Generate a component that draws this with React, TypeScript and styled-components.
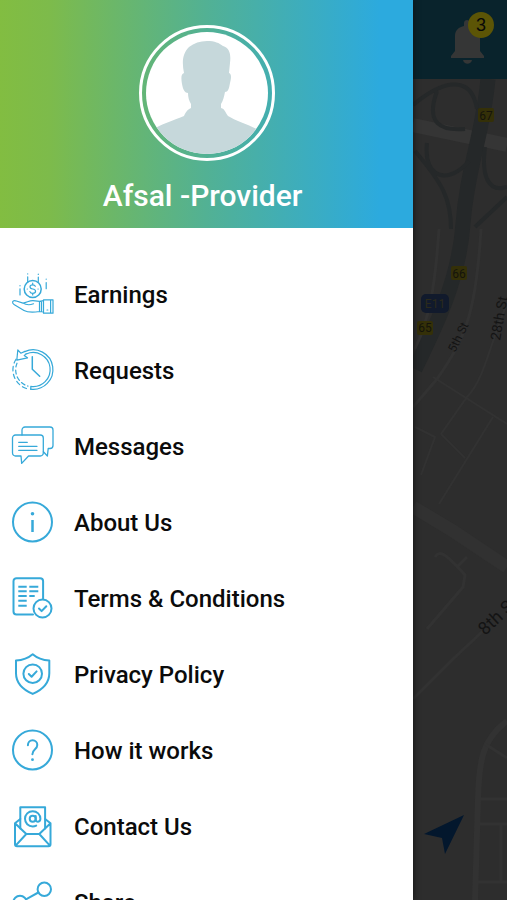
import React from "react";
import styled, { createGlobalStyle } from "styled-components";

const GlobalStyle = createGlobalStyle`
  * { box-sizing: border-box; }
  body { margin: 0; background: #2d2d2d; font-family: Roboto, "Liberation Sans", sans-serif; }
`;

const Screen = styled.div`
  display: flex;
  height: 100vh;
  overflow: hidden;
`;

const Drawer = styled.aside`
  display: flex;
  flex-direction: column;
  flex: 0 0 81.5%;
  z-index: 1;
  overflow: hidden;
  background: #fff;
  box-shadow: 0 0 6px #111;
`;

const Profile = styled.header`
  display: flex;
  flex-direction: column;
  flex-shrink: 0;
  align-items: center;
  padding: 25px 0 14px;
  background: linear-gradient(90deg, #82bd41 0%, #7dbb4b 12%, #52b194 50%, #2caade 92%, #2caade 100%);
`;

const AvatarRing = styled.div`
  display: flex;
  width: 136px;
  height: 136px;
  padding: 4px;
  border: 3px solid #fff;
  border-radius: 50%;

  svg {
    width: 100%;
    height: 100%;
    border-radius: 50%;
  }
`;

const Name = styled.h1`
  margin: 16px 0 0;
  padding-right: 8px;
  color: #fff;
  font-size: 30px;
  font-weight: 500;
  line-height: 37px;
`;

const Menu = styled.ul`
  margin: 0;
  padding: 28px 0 0;
  list-style: none;
`;

const MenuLink = styled.a`
  display: flex;
  align-items: center;
  gap: 20px;
  height: 76px;
  padding: 0 12px;
  color: #0b0b0b;
  font-size: 24px;
  font-weight: 500;
  line-height: 30px;
  text-decoration: none;
`;

const MenuLabel = styled.span`
  padding-top: 2px;
`;

const MenuIcon = styled.svg<{ $weight: number }>`
  flex: none;
  width: 42px;
  height: 42px;
  overflow: visible;
  fill: none;
  stroke: #36a9d9;
  stroke-width: ${(p) => p.$weight};
  stroke-linecap: round;
  stroke-linejoin: round;
`;

const Backdrop = styled.main`
  display: flex;
  flex: 1;
  flex-direction: column;
  min-width: 0;
`;

const TopBar = styled.div`
  display: flex;
  flex: 0 0 79px;
  align-items: center;
  justify-content: flex-end;
  padding-right: 13px;
  background: #09232c;
`;

const BellButton = styled.button`
  position: relative;
  width: 46px;
  height: 56px;
  padding: 0;
  border: 0;
  background: none;

  svg {
    display: block;
    width: 100%;
    height: 100%;
  }
`;

const Badge = styled.span`
  position: absolute;
  top: 0;
  right: 0;
  width: 26px;
  height: 26px;
  border-radius: 50%;
  background: #5c5506;
  color: #080808;
  font-size: 18px;
  line-height: 26px;
  text-align: center;
`;

const MapArea = styled.div`
  position: relative;
  flex: 1;
  min-height: 0;
`;

const MapDrawing = styled.svg`
  display: block;
  width: 100%;
  height: 100%;
  fill: none;
  font-family: Roboto, sans-serif;
`;

const LocateButton = styled.button`
  position: absolute;
  bottom: 45px;
  left: 11px;
  width: 40px;
  height: 40px;
  padding: 0;
  border: 0;
  background: none;

  svg {
    display: block;
  }
`;

type Item = { label: string; weight: number; icon: React.ReactNode };

const items: Item[] = [
  {
    label: "Earnings",
    weight: 1.2,
    icon: (
      <>
        <circle cx="20.7" cy="16" r="8.5" strokeWidth="1.5" />
        <path d="M23.3 13.3c-.5-1.2-1.5-1.5-2.6-1.5-3.6 0-3.6 3.8 0 4.2 3.8.4 3.8 4.4 0 4.4-1.6 0-2.4-.7-2.8-1.8M20.7 10.2v1.6M20.7 20.4v1.6M15.2 16h.2M26 16h.2" />
        <path d="M8 12.5v.3M8 15.8V22M15.7.8v.2M15.7 3.8v5M26.3 1.2v.2M26.3 4v4.8M34.2 6v.2M34.2 9.5v6.2" />
        <path d="M27.5 28.3 21 27.6c-3.8-.2-6 2-10 2.5l-7.4-2.3C.3 27.1-.4 29.9 2 31.4l10 6c4.2 2.4 9.5 2 15.5 1.1M11 30.1c3.4 2.2 7.8 1.7 10.5.7M27.5 28.3v10.2M29.5 28.1v10.4M27.5 28.3l4-.6M27.5 38.5l4 .5" />
        <path d="M31.5 26.8H41v13.4h-9.5zM38.6 27v13M35 37h.8" />
      </>
    ),
  },
  {
    label: "Requests",
    weight: 1.2,
    icon: (
      <>
        <path d="M12.8 2.6A19.8 19.8 0 1 1 18.5 40.2" />
        <path d="M14.3 5A17 17 0 1 1 18.8 37.4v2.8" />
        <path d="M5.8 1 4.8 11.2 15.5 8.8 12.2 6.6 14.2 4.6M5.8 1l3 3.2 4.1-1.8" />
        <path d="M4 10.2A19.8 19.8 0 0 0 16 40" strokeDasharray="4.4 3.4" />
        <path d="M5 14.2A17 17 0 0 0 16 37.1" strokeDasharray="4 3" />
        <path d="M20.3 7.7v12.6l7.4 7" strokeWidth="1.5" />
      </>
    ),
  },
  {
    label: "Messages",
    weight: 1.3,
    icon: (
      <>
        <path d="M3.5 10h24.8a3 3 0 0 1 3 3v15a3 3 0 0 1-3 3H16.5l-6.8 7.4L9 31H3.5a3 3 0 0 1-3-3V13a3 3 0 0 1 3-3z" />
        <path d="M10 10V5a3 3 0 0 1 3-3h25a3 3 0 0 1 3 3v15.5a3 3 0 0 1-3 3h-1.8l-.8 7.5-4-4.2" />
        <path d="M6.7 17.3h8.6M6.7 21.3H25M6.7 25.3H25" />
      </>
    ),
  },
  {
    label: "About Us",
    weight: 2,
    icon: (
      <>
        <circle cx="20.5" cy="21" r="19.5" />
        <circle cx="20.5" cy="12.7" r="1.8" fill="#36a9d9" stroke="none" />
        <path d="M20.5 19v12" strokeWidth="2.5" strokeLinecap="butt" />
      </>
    ),
  },
  {
    label: "Terms & Conditions",
    weight: 2,
    icon: (
      <>
        <path d="M21 37.5H4.5a3 3 0 0 1-3-3V4.2a3 3 0 0 1 3-3h23.6a3 3 0 0 1 3 3V22" />
        <path
          d="M6.3 9.7h8.4M17.3 9.7h9M6.3 14.3h8.4M17.3 14.3h9M6.3 19h8.4M17.3 19h5.4M6.3 23.7h8.4M6.3 28.7h8.4"
          strokeLinecap="butt"
        />
        <circle cx="30.5" cy="31.5" r="9" />
        <path d="m27 31.5 2.6 2.6 4.7-4.8" />
      </>
    ),
  },
  {
    label: "Privacy Policy",
    weight: 2,
    icon: (
      <>
        <path d="M20.7 1.2c4.6 4 9.8 5.9 16.6 6.3v12.7c0 9.5-6.8 16.4-16.6 20.7C10.9 36.6 4 29.7 4 20.2V7.5c6.9-.4 12.1-2.3 16.7-6.3z" />
        <circle cx="20.7" cy="20.7" r="9.3" />
        <path d="m16.8 21 2.8 2.8 5-5.4" />
      </>
    ),
  },
  {
    label: "How it works",
    weight: 2,
    icon: (
      <>
        <circle cx="20.5" cy="21" r="19.5" />
        <path d="M15.9 16.3c0-2.9 2-5 4.7-5s4.7 2 4.7 4.7c0 4.5-4.9 4-4.9 9.3" />
        <circle cx="20.5" cy="30.7" r="1.4" fill="#36a9d9" stroke="none" />
      </>
    ),
  },
  {
    label: "Contact Us",
    weight: 2,
    icon: (
      <>
        <path d="M8.3 23.5V2.2h24.8v21.3" />
        <path d="m8.3 14-5.3 4.3v21a2 2 0 0 0 2 2h31.500a2 2 0 0 0 2-2v-21L33.100 14M3 18.300 14.300 29h13L38.500 18.300M14.300 29 3.600 40.700M27.300 29l10.600 11.700" />
        <circle cx="20.7" cy="13.8" r="3" />
        <path d="M23.7 11v3.4c0 3.200 4.700 3 4.700-.6 0-4.400-3.400-7.600-7.700-7.600S13 9.400 13 13.800s3.400 7.600 7.700 7.600c1.300 0 2.500-.3 3.500-.8" />
      </>
    ),
  },
  {
    label: "Share",
    weight: 2,
    icon: (
      <>
        <circle cx="32.3" cy="8.3" r="6.7" />
        <circle cx="8" cy="21.5" r="6.7" />
        <circle cx="32.3" cy="34" r="6.7" />
        <path d="m14 18.300 12.300-6.800M14 24.700 26.300 31" />
      </>
    ),
  },
];

function Avatar() {
  return (
    <svg viewBox="0 0 122 122" role="img" aria-label="Profile photo">
      <rect width="122" height="122" fill="#fff" />
      <path
        fill="#c6d8db"
        d="M38 41c-2-10-2-19 5-26 5-4 11-6 18-6 8 0 12 2 16 5 7 2 8 9 7 17l-1 10c3 1 2 6 1 10-1 6-2 9-5 9-1 5-2 9-4 12l0 4c4 1 4 4 7 8 8 5 22 9 32 15l0 23H5V99c9-7 24-11 33-15 2-4 3-6 7-8l0-4c-2-3-3-7-3-11-3 0-5-3-6-9-1-6-1-10 2-11z"
      />
    </svg>
  );
}

function StreetMap() {
  return (
    <MapDrawing viewBox="0 0 94 821" preserveAspectRatio="xMinYMin slice" aria-hidden="true">
      <rect width="94" height="821" fill="#2d2d2d" />
      <g stroke="#323232" strokeWidth="3">
        <path d="M0 46 94 66" stroke="#353535" strokeWidth="14" />
        <path d="M26 150C22 210 16 240 2 270M68 150C63 235 52 260 24 300L0 328" />
        <path d="M94 225C78 260 72 300 54 318L28 355M20 298 94 345M80 338 26 425M2 348l20 10-14 38M28 355l24 24" strokeWidth="2" />
        <path d="M0 428 40 452 94 488" strokeWidth="13" stroke="#313131" />
        <path d="M22 478c5-8 12-2 30 18l-2 12L14 550M44 488l10-10M70 552 40 580 0 620" />
        <path d="M94 642C70 660 66 680 65 720l-3 101" strokeWidth="6" />
        <path d="M72 665l22 14M66 720h28M66 745h28M88 745v58M62 803h32" />
      </g>
      <g stroke="#252829">
        <path d="M75 0C70 55 54 90 50 145S24 245 2 290" strokeWidth="15" />
        <path d="M0 26C26 4 58-8 64 30M24 12C12 45 28 52 52 50M14 64c-4 36 22 42 42 18M2 72C30 105 38 120 38 150M72 68c-4 30 4 46 22 40M94 118 62 148" strokeWidth="4" />
      </g>
      <g fill="#343008">
        <rect x="65" y="29" width="16" height="14" rx="2" />
        <rect x="38" y="187" width="16" height="14" rx="2" />
        <rect x="4" y="242" width="16" height="14" rx="2" />
      </g>
      <rect x="8" y="215" width="28" height="19" rx="5" fill="#111a2c" />
      <g fontSize="12" textAnchor="middle" fill="#15140b">
        <text x="73" y="41">67</text>
        <text x="46" y="199">66</text>
        <text x="12" y="253">65</text>
      </g>
      <text x="22" y="229" fontSize="12" textAnchor="middle" fill="#2b2a1b">E11</text>
      <g fill="#141414">
        <text transform="translate(42 274) rotate(-64)" fontSize="12">5th St</text>
        <text transform="translate(87 262) rotate(-80)" fontSize="14">28th St</text>
        <text transform="translate(72 557) rotate(-43)" fontSize="18">8th St</text>
      </g>
    </MapDrawing>
  );
}

export default function App() {
  return (
    <>
      <GlobalStyle />
      <Screen>
        <Drawer>
          <Profile>
            <AvatarRing>
              <Avatar />
            </AvatarRing>
            <Name>Afsal -Provider</Name>
          </Profile>
          <nav>
            <Menu>
              {items.map((item) => (
                <li key={item.label}>
                  <MenuLink href="#">
                    <MenuIcon $weight={item.weight} viewBox="0 0 42 42" aria-hidden="true">
                      {item.icon}
                    </MenuIcon>
                    <MenuLabel>{item.label}</MenuLabel>
                  </MenuLink>
                </li>
              ))}
            </Menu>
          </nav>
        </Drawer>
        <Backdrop>
          <TopBar>
            <BellButton aria-label="Notifications">
              <svg viewBox="0 0 46 56" aria-hidden="true">
                <path
                  fill="#353636"
                  d="M3 46v-2l4-5V24c0-6 4-9 9-10v-3c0-4 6-4 6 0v3c6 1 10 4 10 10v15l4 5v2zM15 48h9c-1 5-8 5-9 0z"
                />
              </svg>
              <Badge>3</Badge>
            </BellButton>
          </TopBar>
          <MapArea>
            <StreetMap />
            <LocateButton aria-label="My location">
              <svg width="40" height="40" viewBox="0 0 40 40" aria-hidden="true">
                <path fill="#03172d" d="M0 19 40 0 21 39 18 23z" />
              </svg>
            </LocateButton>
          </MapArea>
        </Backdrop>
      </Screen>
    </>
  );
}
